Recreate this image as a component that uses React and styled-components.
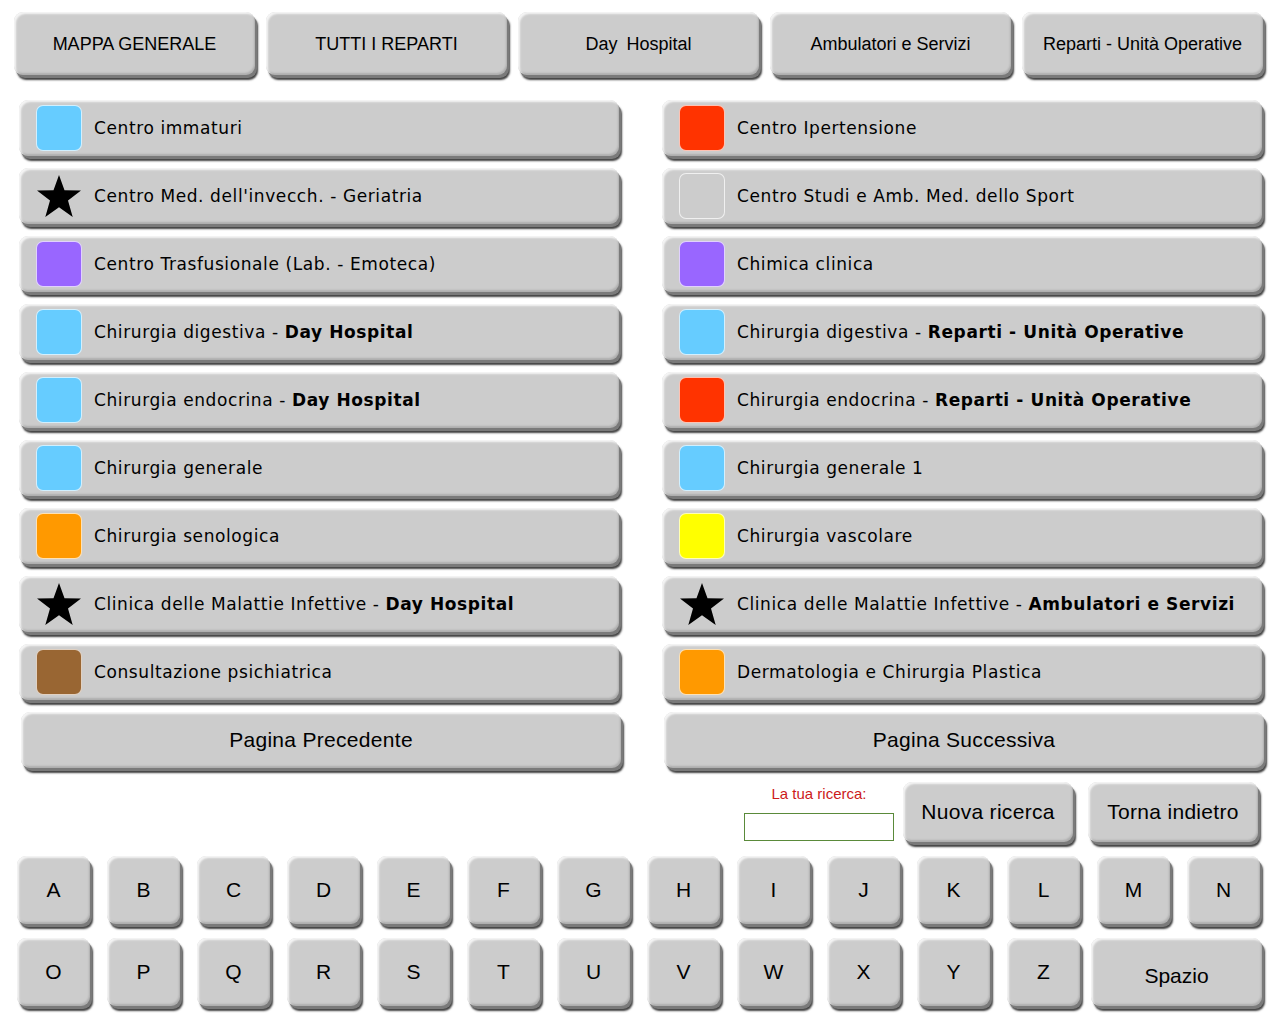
import React from 'react'
import styled, { createGlobalStyle } from 'styled-components'

const Global = createGlobalStyle`
  html, body { margin: 0; padding: 0; background: #ffffff; }
  body { width: 1280px; height: 1024px; overflow: hidden; }
`

const bevel = `
  background: #cccccc;
  border: none;
  border-radius: 9px;
  box-shadow:
    inset 2px 2px 2px rgba(255,255,255,0.8),
    inset -1px -2px 2px rgba(0,0,0,0.15),
    2px 3px 0 #7a7a7a,
    3px 5px 2px #404040;
  color: #000;
  cursor: pointer;
`

const Page = styled.div`
  width: 1280px;
  font-family: "Liberation Sans", Arial, sans-serif;
`

const TopBar = styled.div`
  display: grid;
  grid-template-columns: repeat(5, 241px);
  column-gap: 11px;
  padding: 12px 0 0 14px;
`

const TopButton = styled.button`
  ${bevel}
  height: 63px;
  font-family: "Liberation Sans", Arial, sans-serif;
  font-size: 18px;
  padding-top: 3px;
  word-spacing: ${p => (p.$wide ? '4px' : '0')};
`

const Lists = styled.div`
  display: grid;
  grid-template-columns: 600px 600px;
  column-gap: 43px;
  row-gap: 12px;
  padding: 25px 0 0 19px;
`

const Row = styled.div`
  ${bevel}
  height: 56px;
  display: flex;
  align-items: center;
  gap: 12px;
  padding-left: 17px;
  font-family: "DejaVu Sans", Verdana, sans-serif;
  font-size: 17px;
  letter-spacing: 0.6px;
  white-space: nowrap;
`

const Swatch = styled.div`
  width: 44px;
  height: 44px;
  border-radius: 7px;
  background: ${p => p.$color};
  border: 1px solid rgba(255,255,255,0.7);
  flex: none;
`

const StarBox = styled.div`
  width: 46px;
  height: 46px;
  display: flex;
  align-items: center;
  justify-content: center;
  flex: none;
`

const Nav = styled.button`
  ${bevel}
  height: 56px;
  margin-left: 2px;
  margin-right: -2px;
  font-family: "Liberation Sans", Arial, sans-serif;
  font-size: 21px;
  letter-spacing: 0.3px;
`

const SearchBar = styled.div`
  display: flex;
  justify-content: flex-end;
  align-items: flex-start;
  padding: 14px 22px 0 0;
`

const SearchField = styled.div`
  display: flex;
  flex-direction: column;
  align-items: center;
  gap: 11px;
  padding-top: 3px;
  margin-right: 9px;
`

const SearchLabel = styled.div`
  color: #cc1a1a;
  font-size: 15px;
`

const SearchInput = styled.input`
  width: 150px;
  height: 28px;
  box-sizing: border-box;
  border: 1px solid #5a8a3a;
  background: #fff;
  outline: none;
`

const ActionButton = styled.button`
  ${bevel}
  width: 170px;
  height: 60px;
  margin-left: ${p => (p.$gap ? '15px' : '0')};
  font-family: "Liberation Sans", Arial, sans-serif;
  font-size: 21px;
  letter-spacing: 0.3px;
`

const Keyboard = styled.div`
  display: grid;
  grid-template-columns: repeat(14, 73px);
  column-gap: 17px;
  row-gap: 14px;
  padding: 14px 0 0 17px;
`

const Key = styled.button`
  ${bevel}
  height: 68px;
  font-family: "Liberation Sans", Arial, sans-serif;
  font-size: 21px;
  grid-column: ${p => (p.$span ? `span ${p.$span}` : 'auto')};
  margin-left: ${p => (p.$span ? '-6px' : '0')};
  margin-right: ${p => (p.$span ? '-2px' : '0')};
  padding-top: ${p => (p.$span ? '9px' : '0')};
`

const Star = () => (
  <svg width="46" height="44" viewBox="0 0 46 44">
    <polygon
      points="23,1 28.5,16.2 45,16.5 32,26.5 36.7,43 23,33.2 9.3,43 14,26.5 1,16.5 17.5,16.2"
      fill="#000"
    />
  </svg>
)

const left = [
  { c: '#66ccff', t: 'Centro immaturi' },
  { star: true, t: "Centro Med. dell'invecch. - Geriatria" },
  { c: '#9966ff', t: 'Centro Trasfusionale (Lab. - Emoteca)' },
  { c: '#66ccff', t: 'Chirurgia digestiva - ', b: 'Day Hospital' },
  { c: '#66ccff', t: 'Chirurgia endocrina - ', b: 'Day Hospital' },
  { c: '#66ccff', t: 'Chirurgia generale' },
  { c: '#ff9900', t: 'Chirurgia senologica' },
  { star: true, t: 'Clinica delle Malattie Infettive - ', b: 'Day Hospital' },
  { c: '#996633', t: 'Consultazione psichiatrica' },
]

const right = [
  { c: '#ff3300', t: 'Centro Ipertensione' },
  { c: '#cccccc', t: 'Centro Studi e Amb. Med. dello Sport' },
  { c: '#9966ff', t: 'Chimica clinica' },
  { c: '#66ccff', t: 'Chirurgia digestiva - ', b: 'Reparti - Unità Operative' },
  { c: '#ff3300', t: 'Chirurgia endocrina - ', b: 'Reparti - Unità Operative' },
  { c: '#66ccff', t: 'Chirurgia generale 1' },
  { c: '#ffff00', t: 'Chirurgia vascolare' },
  { star: true, t: 'Clinica delle Malattie Infettive - ', b: 'Ambulatori e Servizi' },
  { c: '#ff9900', t: 'Dermatologia e Chirurgia Plastica' },
]

const Item = ({ item }) => (
  <Row>
    {item.star ? (
      <StarBox>
        <Star />
      </StarBox>
    ) : (
      <Swatch $color={item.c} />
    )}
    <span>
      {item.t}
      {item.b && <b>{item.b}</b>}
    </span>
  </Row>
)

const row1 = 'ABCDEFGHIJKLMN'.split('')
const row2 = 'OPQRSTUVWXYZ'.split('')

export default function App() {
  const rows = left.map((l, i) => [l, right[i]])
  return (
    <Page>
      <Global />
      <TopBar>
        <TopButton>MAPPA GENERALE</TopButton>
        <TopButton>TUTTI I REPARTI</TopButton>
        <TopButton $wide>Day Hospital</TopButton>
        <TopButton>Ambulatori e Servizi</TopButton>
        <TopButton>Reparti - Unità Operative</TopButton>
      </TopBar>

      <Lists>
        {rows.map(([l, r], i) => (
          <React.Fragment key={i}>
            <Item item={l} />
            <Item item={r} />
          </React.Fragment>
        ))}
        <Nav>Pagina Precedente</Nav>
        <Nav>Pagina Successiva</Nav>
      </Lists>

      <SearchBar>
        <SearchField>
          <SearchLabel>La tua ricerca:</SearchLabel>
          <SearchInput type="text" />
        </SearchField>
        <ActionButton>Nuova ricerca</ActionButton>
        <ActionButton $gap>Torna indietro</ActionButton>
      </SearchBar>

      <Keyboard>
        {row1.map(k => (
          <Key key={k}>{k}</Key>
        ))}
        {row2.map(k => (
          <Key key={k}>{k}</Key>
        ))}
        <Key $span={2}>Spazio</Key>
      </Keyboard>
    </Page>
  )
}
